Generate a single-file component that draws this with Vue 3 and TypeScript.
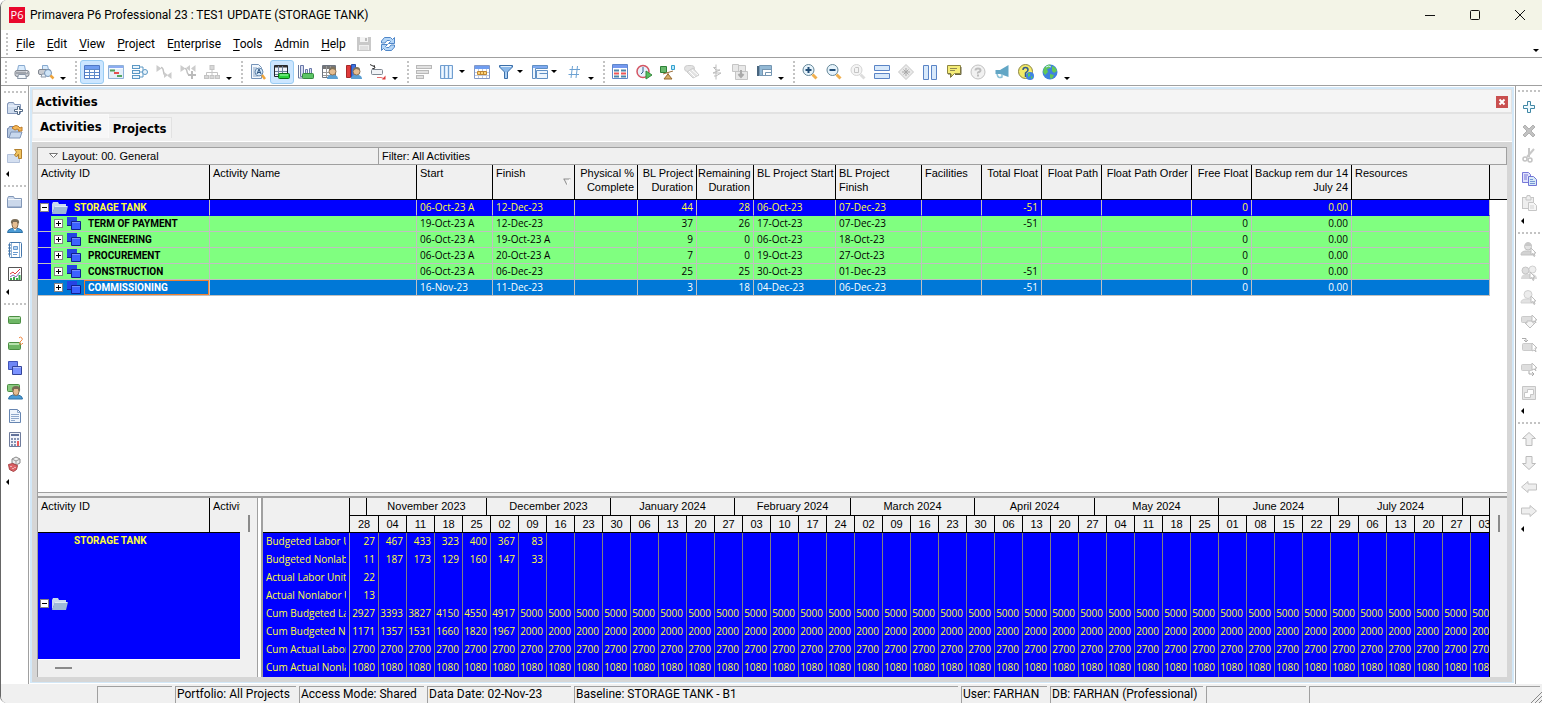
<script setup lang="ts">
interface Tool { id: string; label: string; active?: boolean; menu?: boolean }
interface Column { label: string; width?: number; right?: boolean; sorted?: boolean }
interface Row { name: string; level: number; selected?: boolean; cells: string[] }

const icons: Record<string, string> = {
  save: '<path d="M1 1h14v14H1z" fill="#c9c9c9"/><path d="M4 1h8v5H4z" fill="#f4f4f4"/><path d="M3 9h10v5H3z" fill="#efefef"/><path d="M9 2h2v3H9z" fill="#bbb"/><path d="M4 11h8M4 13h8" stroke="#d0d0d0"/>',
  refresh: '<path d="M1.500 7V5l3-3.500h6l2 2 2-2v6h-6l2-2-1-1H7L5 7z" fill="#b5d6f7" stroke="#4f86c8"/><path d="M14.500 9v2l-3 3.500h-6l-2-2-2 2v-6h6l-2 2 1 1H9L11 9z" fill="#b5d6f7" stroke="#4f86c8"/>',
  print: '<path d="M4.500 1.500h6l1 5h-8z" fill="#d9ebfc" stroke="#87a9cf"/><rect x="1" y="6.500" width="14" height="6" rx="2" fill="#c9ccd2" stroke="#80868f"/><path d="M2 9h12" stroke="#777d86"/><path d="M4.500 10.500h7l1 4h-9z" fill="#f4f8fc" stroke="#8c98a8"/><path d="M12 8h1" stroke="#fff"/>',
  preview: '<path d="M4.500 1.500h5l1 4h-6z" fill="#d9ebfc" stroke="#87a9cf"/><rect x=".5" y="5.500" width="12" height="5" rx="1.500" fill="#c9ccd2" stroke="#80868f"/><path d="M4 10h4v3H3z" fill="#edf3f9" stroke="#8c98a8"/><circle cx="10" cy="9" r="3.500" fill="#cfe5f8" stroke="#7593b5"/><path d="m12.500 11.500 3 3" stroke="#efa53c" stroke-width="2.500"/>',
  table: '<path d="M.5 1.500h15v13H.5z" fill="#fff" stroke="#4f78c4"/><path d="M1 2h14v3H1z" fill="#6f9df0"/><path d="M1 5.500h14M1 8.500h14M1 11.500h14M5.500 5v9M10.500 5v9" stroke="#5d89c9"/>',
  gantt: '<path d="M.5 1.500h15v13H.5z" fill="#f5fafe" stroke="#8fb2d8"/><path d="M1 2h14v2H1z" fill="#8cacf1"/><path d="M1 5h14v9H1z" fill="#e4eff9"/><path d="M2 6.500h5" stroke="#4f9d59" stroke-width="2"/><path d="M6 9h5" stroke="#e54f4f" stroke-width="2"/><path d="M9 12h5" stroke="#55a561" stroke-width="2"/>',
  network: '<g fill="#e9f4fc" stroke="#5c98c4"><rect x=".5" y="1.500" width="7" height="3"/><rect x=".5" y="6.500" width="7" height="3"/><rect x=".5" y="11.500" width="7" height="3"/><path d="M8 3h3v10H8M8 8h3" fill="none"/><circle cx="13" cy="8" r="2.500"/></g>',
  trace: '<path d="M.5 1v7l5-3.500z" fill="#ccc"/><path d="M5 3.500c4 0 1 8 5 8" fill="none" stroke="#c2c2c2" stroke-width="1.500"/><path d="M8 8v6l4-3zM15.500 8v7L11 11.500z" fill="#ccc"/>',
  traceplus: '<path d="M.5 1v7l5-3.500zM10 1v6L6 4zM15.500 1v7L11 4.500z" fill="#ccc"/><path d="M5 4.500c3 0 1 6 4 6" fill="none" stroke="#c2c2c2" stroke-width="1.500"/><path d="M12 7v8M8 11h8" stroke="#bbb" stroke-width="2"/>',
  wbs: '<g fill="#d8d8d8" stroke="#c4c4c4"><rect x="6" y="1.500" width="4" height="4"/><rect x=".5" y="11.500" width="4" height="3"/><rect x="6" y="11.500" width="4" height="3"/><rect x="11.500" y="11.500" width="4" height="3"/><path d="M8 6v5M2.500 11V8.500h11V11" fill="none"/></g>',
  find: '<path d="M1.500.5h7l3 3v11h-10z" fill="#f3f8fd" stroke="#7694b9"/><path d="M3 4h4M3 6h2M3 8h2M3 10h2M3 12h5" stroke="#88a3c5"/><circle cx="9" cy="8" r="4" fill="#d3e7f8" stroke="#6688ad"/><path d="m7 10 2-5 2 5M8 8.500h2" stroke="#2d5480" fill="none"/><path d="m12 11 3 4" stroke="#efa53c" stroke-width="2.500"/>',
  spread: '<path d="M.5 1.500h13v11H.5z" fill="#eef2f8" stroke="#22252b"/><path d="M1 2.500h12" stroke="#333" stroke-width="2"/><path d="M1 7.500h12M1 10.500h12M4.500 2v10M8.500 2v10" stroke="#6d7f9c"/><rect x="4.500" y="9.500" width="11" height="5" rx="1" fill="#28d23c" stroke="#0a6f16"/><path d="M6 11h8" stroke="#a5f7ad"/>',
  profile: '<path d="M.5 1v13h15" fill="none" stroke="#67779c"/><path d="M2.500 1.500h3v11h-3zM7.500 5.500h2v7h-2zM11.500 4.500h2v7h-2z" fill="#d9ddf2" stroke="#6878a8"/><rect x="4.500" y="9.500" width="11" height="5" rx="1" fill="#5bc465" stroke="#348a3d"/>',
  usage: '<path d="M.5 1.500h13v12H.5z" fill="#fff" stroke="#6e7580"/><path d="M1 2h12v3H1z" fill="#777"/><path d="M1 8.500h12M1 11.500h12M4.500 2v11M8.500 2v11" stroke="#999"/><path d="M5 15q0-3 3-4h5q3 1 3 4z" fill="#5b9fd2"/><circle cx="10.500" cy="7.500" r="3.500" fill="#e5bd91" stroke="#8a7252"/><path d="M7 7q0-4 4-4 3 0 3 3l-4-1z" fill="#80735b"/>',
  resprofile: '<path d="M.5 1.500h4v12h-4z" fill="#e03a3a" stroke="#a72828"/><path d="M5.500.5h4v13h-4z" fill="#3f71df" stroke="#2750a6"/><path d="M5 15q0-3 3-4h5q3 1 3 4z" fill="#5b9fd2"/><circle cx="10.500" cy="7.500" r="3.500" fill="#e5bd91" stroke="#8a7252"/><path d="M7 7q0-4 4-4 3 0 3 3l-4-1z" fill="#80735b"/>',
  trace2: '<path d="m0 .5 4 2M2 5l3-1-1-3" fill="none" stroke="#333"/><rect x="1.500" y="5.500" width="11" height="5" rx="1" fill="#f1f3f6" stroke="#7f8791"/><path d="M7 13.500h4l3 1" stroke="#e46a6a" fill="none"/><path d="m12 15.500 3.500-4v4z" fill="#dc3939"/>',
  bars: '<g fill="#e1e1e1" stroke="#b9b9b9"><rect x=".5" y="1.500" width="15" height="3"/><rect x=".5" y="6.500" width="12" height="3"/><rect x=".5" y="11.500" width="7" height="3"/></g>',
  columns: '<g fill="#d7e8fa" stroke="#709ed0"><path d="M.5 1.500h12v13H.5zM4.500 1.500v13M8.500 1.500v13"/></g><path d="M2.500 2v12M6.500 2v12M10.500 2v12" stroke="#f1f8ff"/>',
  tscale: '<path d="M.5 1.500h15v13H.5z" fill="#fff" stroke="#8399c6"/><path d="M1 2h14v3H1z" fill="#6f9df0"/><path d="M1 8.500h14M1 11.500h14M4.500 5v9M8.500 5v9M12.500 5v9" stroke="#c2cadd"/><path d="M3.500 7.500h9v3h-9zM6.500 7v3M9.500 7v3" fill="#ffd476" stroke="#bf8633"/>',
  filter: '<path d="M1.500 1.500h13v1.500L9.500 8v6.500h-3V8l-5-5z" fill="#8bb9ea" stroke="#3b6ea8"/><path d="M3 2.500h10" stroke="#e4f1ff"/><path d="M8 8v6" stroke="#c7e0f9"/>',
  group: '<g fill="#edf5fd" stroke="#5f8fc4"><path d="M.5 1.500h15v3h-12v10h-3zM4.500 6.500h11v8h-11zM7.500 9.500h8"/></g><path d="M1 3h14" stroke="#7faaf1" stroke-width="2"/>',
  hash: '<path d="M6.500 2 5 14M11.500 2 10 14M3.500 5.500H14M2.500 10.500H13" stroke="#6da2d3" fill="none"/>',
  detail: '<path d="M.5.5h15v14H.5z" fill="#fff" stroke="#5e87ca"/><path d="M1 1h14v3H1z" fill="#7599ef"/><path d="M2 6.500h5M9 6.500h5M2 12.500h5M9 12.500h5" stroke="#4e86a7" stroke-width="2"/><path d="M2 9.500h5M9 9.500h5" stroke="#ed5656" stroke-width="2"/>',
  clock: '<circle cx="7" cy="7.500" r="6" fill="#e7f3fc" stroke="#d45563" stroke-width="1.500"/><path d="M7 3v5l-2 2" stroke="#345f8e" fill="none"/><path d="m10 7 6 4-6 4z" fill="#55c05f" stroke="#39883f"/>',
  level: '<path d="M.5 2.500h6v6h-6z" fill="#69ba6e" stroke="#2e8138"/><path d="M11.500 1.500h3v4h-3z" fill="#b9e7fb" stroke="#34a1cd"/><path d="m3 10 10-3M8 8v4" stroke="#9c7140"/><path d="m8 10 4 5H4z" fill="#d8ae68" stroke="#95692c"/>',
  progress: '<g fill="#e3e3e3" stroke="#ccc"><rect x=".5" y="1.500" width="10" height="6" rx="3"/><path d="m3 8 6 6 6-3-6-7z"/></g><path d="m5 7 6 6m-3-7 6 5" stroke="#fff"/>',
  line: '<path d="M8 .5v15M8 3.500H5.500L8 6h4L5 9h8l-5 3H6" fill="none" stroke="#bdbdbd"/>',
  store: '<g fill="#e8e8e8" stroke="#c5c5c5"><path d="M.5.500h6v7h-6zM6.500 1.500h7v6h-7zM3.500 7.500h12v8h-12z"/></g><path d="M9 6v6M6.500 10 9 13l2.500-3" fill="none" stroke="#aaa" stroke-width="2"/>',
  barchart: '<path d="M1 2h2v10H1z" fill="#48657e"/><path d="M3 2h12v3H6v7H3z" fill="#92b8d4"/><path d="M3.500 1.500h12v10h-12zM6 5.500h9M6.500 5.500v6M9.500 11V8.500H15" fill="none" stroke="#7596b2"/>',
  zoomin: '<circle cx="6.500" cy="6" r="5.500" fill="#e6f3fb" stroke="#66889a"/><path d="M6.500 3v6M3.500 6h6" stroke="#234e77" stroke-width="2"/><path d="m10.500 10.500 4 4" stroke="#f0b050" stroke-width="3"/>',
  zoomout: '<circle cx="6.500" cy="6" r="5.500" fill="#e6f3fb" stroke="#66889a"/><path d="M3.500 6h6" stroke="#234e77" stroke-width="2"/><path d="m10.500 10.500 4 4" stroke="#f0b050" stroke-width="3"/>',
  zoomfit: '<circle cx="6.500" cy="6" r="5.500" fill="#f4f4f4" stroke="#d5d5d5"/><path d="M4.500 8.500v-4l1-1h3v5z" fill="none" stroke="#c5c5c5"/><path d="m10.500 10.500 4 4" stroke="#ddd" stroke-width="3"/>',
  splith: '<g fill="#d8e9fb" stroke="#5a84c6"><path d="M.5 1.500h15v5H.5zM.5 9.500h15v5H.5z"/></g>',
  diamond: '<path d="M8 .5 15.500 8 8 15.500.5 8z" fill="#e8e8e8" stroke="#c8c8c8"/><path d="M8 4v8M4 8h8M5.500 5.500l5 5M10.500 5.500l-5 5" stroke="#a9a9a9"/>',
  splitv: '<g fill="#d8e9fb" stroke="#5a84c6"><path d="M1.500 1.500h5v14h-5zM9.500 1.500h5v14h-5z"/></g>',
  note: '<path d="M1.500 1.500h13v8h-6l-4 4v-4h-3z" fill="#f5ed78" stroke="#8f8640"/><path d="M4 4.500h7M4 6.500h5" stroke="#918a51"/><path d="M2 10h3v3M9 10.500h6V3" stroke="#696440" fill="none"/>',
  help: '<circle cx="8" cy="8" r="7" fill="#f1f1f1" stroke="#c2c2c2"/><path d="M5.500 6.500q0-2 2.500-2t2.500 2q0 1-1.500 1.500T8 9.500M8 10.500v2" fill="none" stroke="#bdbdbd" stroke-width="2"/>',
  horn: '<path d="M14.500 1v12L6 10H1.500V6H6z" fill="#62a6c5"/><path d="M3 10q1 5 5 3V10" fill="none" stroke="#8cc1d6" stroke-width="1.500"/>',
  helpweb: '<circle cx="7.500" cy="7.500" r="7" fill="#f3ea68" stroke="#8b8544"/><path d="M5 6q0-2.500 2.500-2.500T10 6q0 1-1.500 2l-1 1v2M7.500 11v2" fill="none" stroke="#31598e" stroke-width="1.500"/><circle cx="12" cy="12" r="4" fill="#3f83e6"/><path d="M10 9q3 0 2 3l-2 1zM13 12l2 1-2 2z" fill="#58ca5c"/>',
  globe: '<circle cx="8" cy="8" r="7.500" fill="#3f80df"/><path d="M2 4q4-5 7-3L8 4 5 5l1 3-3 3-2-3zM10 2q4 1 5 5l-3 2-2-2zM8 10l4 1-2 4-2-1z" fill="#63c857"/><path d="M4 3q3-2 5 0" stroke="#cfefff" fill="none"/>',
  foldernew: '<path d="M.5 13.500v-10h1v-1h5l1 2h6v9z" fill="#cfdcee" stroke="#8497b8"/><path d="M1 6h12" stroke="#f2f7ff"/><path d="M10.500 6.500h2v3h3v2h-3v3h-2v-3h-3v-2h3z" fill="#fff" stroke="#536984"/>',
  folderopen: '<path d="M.5 13.500v-9h1l1-2h5l1 2h4v9z" fill="#b5c7e0" stroke="#7489ae"/><path d="m2 14 2-6h11l-2 6z" fill="#c7d7ec" stroke="#7e94b7"/><path d="M5 4q4-5 8 0l2-1v4h-4l1-1q-2-2-4 0z" fill="#f7b958" stroke="#bc7a26"/>',
  folderclose: '<path d="M.5 14.500v-8h12v8z" fill="#d4dff0" stroke="#b2c1da"/><path d="M7.500 1.500h7v9h-3V6l-2 3-2-2 2-3z" fill="#efc25f" stroke="#b2812f"/>',
  folder: '<path d="M.5 13.500v-9l1-2h5l1 2h7v9z" fill="#cbd8eb" stroke="#8398b8"/><path d="M1 5.500h13" stroke="#f3f7fc"/><path d="M1 12.500h13" stroke="#a5b6d2"/>',
  person: '<path d="M.5 14.500q0-3 4-4h7q4 1 4 4z" fill="#4b9bd5" stroke="#2e71a5"/><path d="m6 10 2 3 2-3z" fill="#fff"/><ellipse cx="8" cy="6.500" rx="3" ry="4" fill="#e6bd91" stroke="#876c4f"/><path d="M4 6Q3 1 8 1t4 5l-2-2H6z" fill="#796b55"/>',
  book: '<rect x="2.500" y=".5" width="12" height="15" rx="1" fill="#fff" stroke="#4577ac"/><path d="M1 3h3M1 6h3M1 9h3M1 12h3" stroke="#4577ac"/><path d="M4.500 1v14M12.500 1v14" stroke="#8fb3d8"/><path d="M6.500 4.500h4v3h-4zM6 10.500h5M6 12.500h4" fill="#b7d4f2" stroke="#6a9bd0"/>',
  chart: '<path d="M1.500 1.500h13v13h-13z" fill="#fff" stroke="#555"/><path d="m3 8 3-2 2 2 5-5" fill="none" stroke="#e23c3c"/><path d="m3 11 3-2 3 2 4-5" fill="none" stroke="#8a68b5"/><path d="M4 12v2M7 11v3M10 12v2M12.500 9v5" stroke="#3baa4c" stroke-width="2"/>',
  activity: '<rect x="1.500" y="4.500" width="12" height="7" rx="1" fill="#6eb665" stroke="#4b8e43"/><path d="M2 6h11" stroke="#b7e2ae" stroke-width="2"/>',
  activitysteps: '<rect x="1.500" y="6.500" width="12" height="7" rx="1" fill="#6eb665" stroke="#4b8e43"/><path d="M2 8h10" stroke="#b7e2ae" stroke-width="2"/><path d="M12 2q1-2 3 0 1 2-1 3t-1 3q2 1 3-1" fill="none" stroke="#f18a46"/>',
  wbsblue: '<path d="M1.500 1.500h9v8h-9z" fill="#6f87f5" stroke="#4154b9"/><path d="M5.500 6.500h9v8h-9z" fill="#7b93ff" stroke="#34459a"/><path d="M6 7.500h8" stroke="#a9b9ff"/>',
  assign: '<rect x=".5" y=".5" width="12" height="7" rx="1" fill="#8acb80" stroke="#4b8e43"/><path d="M1.500 15q0-3 4-4h6q4 1 4 4z" fill="#4b9bd5" stroke="#2e71a5"/><ellipse cx="9" cy="7.500" rx="3" ry="4" fill="#e6bd91" stroke="#876c4f"/><path d="M5 7Q4 2 9 2t4 5l-2-2H7z" fill="#796b55"/>',
  doc: '<path d="M2.500 1.500h8l3 3v10h-11z" fill="#f0f6fd" stroke="#6685b1"/><path d="M10.500 1.500v3h3M4 6.500h8M4 8.500h8M4 10.500h8M4 12.500h4" fill="none" stroke="#8fa8cb"/>',
  calc: '<path d="M2.500.5h11v14h-11z" fill="#f2f4fa" stroke="#6f7c9c"/><path d="M4 3h8" stroke="#62729b" stroke-width="2"/><path d="M4 7h2M7 7h2M4 10h2M7 10h2M4 13h2M7 13h2M10 7h2" stroke="#8391b1" stroke-width="2"/><path d="M11 9v5" stroke="#ee5a5a" stroke-width="2"/>',
  dice: '<path d="m5 3 4-2 4 2v4L9 9 5 7z" fill="#eee" stroke="#888"/><path d="m5 3 4 2 4-2M9 5v3" fill="none" stroke="#999"/><path d="m1.500 8.500 4-1 5 2-1 4-3 2-4-2z" fill="#dc6266" stroke="#a84143"/><path d="M4 10v1M6 12v1M8 11v1" stroke="#fff"/>',
  add: '<path d="M6.500 2.500h3v4h4v3h-4v4h-3v-4h-4v-3h4z" fill="#eefaff" stroke="#4087a5"/>',
  remove: '<path d="m4 2 4 4 4-4 2 2-4 4 4 4-2 2-4-4-4 4-2-2 4-4-4-4z" fill="#c2c2c2" stroke="#b1b1b1"/>',
  cut: '<path d="M8 1v9M13 2 6 10" stroke="#c8c8c8" stroke-width="2" fill="none"/><circle cx="4" cy="12" r="2" fill="none" stroke="#c3c3c3" stroke-width="1.500"/><circle cx="9" cy="13" r="2" fill="none" stroke="#c3c3c3" stroke-width="1.500"/>',
  copy: '<path d="M1.500 1.500h6l2 2v8h-8z" fill="#e0e2fb" stroke="#7879d8"/><path d="M3 4h4M3 6h3M3 8h3" stroke="#7677d7"/><path d="M7.500 5.500h5l3 3v6h-8z" fill="#d7e9f7" stroke="#7074d5"/><path d="M9 8.500h3M9 10.500h5M9 12.500h5" stroke="#7898d5"/>',
  paste: '<rect x="1.500" y="2.500" width="11" height="11" fill="#eee" stroke="#c6c6c6"/><path d="M5 2h1V.500h3V2h1v3H5z" fill="#eee" stroke="#c6c6c6"/><path d="M7.500 7.500h5l3 3v5h-8z" fill="#f6f6f6" stroke="#c6c6c6"/><path d="M9 11h4M9 13h4" stroke="#d3d3d3"/>',
  gperson: '<path d="M0 14q0-4 5-4h4q4 0 4 4z" fill="#d2d2d2" stroke="#c3c3c3"/><circle cx="7" cy="5.500" r="3.500" fill="#e2e2e2" stroke="#c0c0c0"/><path d="M4 5q0-4 3-4t4 4z" fill="#c8c8c8"/><path d="m10 7 5 5h-2l1 3-1 .5-1-3-2 1z" fill="#fff" stroke="#bdbdbd"/>',
  gpeople: '<path d="M0 14q0-4 4-5h8q4 1 4 5z" fill="#d9d9d9"/><circle cx="4.500" cy="5.500" r="3.500" fill="#dedede" stroke="#c5c5c5"/><circle cx="11.500" cy="4.500" r="3.500" fill="#eee" stroke="#d0d0d0"/><path d="m9 7 5 5h-2l1 3-1 .5-1-3-2 1z" fill="#fff" stroke="#bdbdbd"/>',
  grole: '<path d="M0 14q0-4 5-4h4q4 0 4 4z" fill="#e2e2e2" stroke="#d3d3d3"/><circle cx="7" cy="5.500" r="4" fill="#ececec" stroke="#d0d0d0"/><path d="m10 7 5 5h-2l1 3-1 .5-1-3-2 1z" fill="#fff" stroke="#bdbdbd"/>',
  gact: '<rect x=".5" y="3.500" width="11" height="6" rx="1" fill="#dedede" stroke="#cbcbcb"/><path d="m9 15-5-5h2V8h6v2h2z" fill="#f5f5f5" stroke="#bfbfbf"/><path d="m11 2 5 5h-2l1 3-2-2-2 1z" fill="#fff" stroke="#bdbdbd"/>',
  gpred: '<path d="M1 1.500h4V5M3 3l2 2 2-2" fill="none" stroke="#aaa"/><rect x="1.500" y="6.500" width="10" height="7" rx="1" fill="#dedede" stroke="#cbcbcb"/><path d="m11 6 5 5h-2l1 4-2-2-2 1z" fill="#fff" stroke="#bdbdbd"/>',
  gsucc: '<rect x=".5" y="3.500" width="11" height="6" rx="1" fill="#dedede" stroke="#cbcbcb"/><path d="M8 10v3h5m-2-2 2 2-2 2" fill="none" stroke="#aaa"/><path d="m11 2 5 5h-2l1 3-2-2-2 1z" fill="#fff" stroke="#bdbdbd"/>',
  gcode: '<path d="M1.500 1.500h13v13h-13z" fill="#e6e6e6" stroke="#c6c6c6"/><path d="M6.500 4.500h6v5h-3v3h-6v-5h3z" fill="#fff" stroke="#c6c6c6"/>',
  up: '<path d="m8 1.500 6.500 6h-3.500v7H5v-7H1.500z" fill="#eee" stroke="#bcbcbc"/>',
  down: '<path d="M8 14.500 1.500 8.500H5v-7h6v7h3.500z" fill="#eee" stroke="#bcbcbc"/>',
  left: '<path d="M.5 8 7 2.500V5h8.500v6H7v2.500z" fill="#eee" stroke="#c2c2c2"/>',
  right: '<path d="M15.500 8 9 2.500V5H.5v6H9v2.500z" fill="#eee" stroke="#c2c2c2"/>',
  tankfolder: '<path d="M0 14V4l1-2h5l1 2h7v3H3z" fill="#c9dbee"/><path d="m0 14 3-8h13l-2 8z" fill="#9db9d8"/><path d="M3 6.500h12" stroke="#dfeaf6"/>',
  node: '<path d="M0 1h10v8H0z" fill="#2543e4"/><path d="M4.500 5.500h9v8h-9z" fill="#3d62ff" stroke="#10208e"/><path d="M0 9.500h4" stroke="#10208e"/><path d="M5 6.500h8" stroke="#6f8cff"/>',
}

const t = (id: string, label: string, extra: Partial<Tool> = {}): Tool => ({ id, label, ...extra })

const toolbar: Tool[][] = [
  [t('print', 'Print'), t('preview', 'Print Preview')],
  [t('table', 'Activity Table', { active: true }), t('gantt', 'Gantt Chart'), t('network', 'Activity Network'), t('trace', 'Trace Logic'), t('traceplus', 'Trace Options'), t('wbs', 'WBS Chart')],
  [t('find', 'Details'), t('spread', 'Activity Usage Spreadsheet', { active: true }), t('profile', 'Activity Usage Profile'), t('usage', 'Resource Usage Spreadsheet'), t('resprofile', 'Resource Usage Profile'), t('trace2', 'Relationships')],
  [t('bars', 'Bars'), t('columns', 'Columns', { menu: true }), t('tscale', 'Timescale'), t('filter', 'Filters', { menu: true }), t('group', 'Group and Sort', { menu: true }), t('hash', 'Renumber')],
  [t('detail', 'Activity Details'), t('clock', 'Schedule'), t('level', 'Level Resources'), t('progress', 'Apply Actuals'), t('line', 'Progress Line'), t('store', 'Store Period'), t('barchart', 'Progress Spotlight')],
  [t('zoomin', 'Zoom In'), t('zoomout', 'Zoom Out'), t('zoomfit', 'Zoom Fit'), t('splith', 'Split Horizontally'), t('diamond', 'Center'), t('splitv', 'Split Vertically'), t('note', 'Hint Help'), t('help', 'Help'), t('horn', 'News'), t('helpweb', 'Online Help'), t('globe', 'Web')],
]
const leftTools: Tool[][] = [
  [t('foldernew', 'New Project'), t('folderopen', 'Open Project'), t('folderclose', 'Close Project')],
  [t('folder', 'Projects'), t('person', 'Resources'), t('book', 'Reports'), t('chart', 'Tracking')],
  [t('activity', 'Activities'), t('activitysteps', 'Activity Steps'), t('wbsblue', 'WBS'), t('assign', 'Assignments'), t('doc', 'Documents'), t('calc', 'Expenses'), t('dice', 'Risks')],
]
const rightTools: Tool[][] = [
  [t('add', 'Add'), t('remove', 'Delete'), t('cut', 'Cut'), t('copy', 'Copy'), t('paste', 'Paste')],
  [t('gperson', 'Assign Resource'), t('gpeople', 'Assign by Role'), t('grole', 'Assign Role'), t('gact', 'Assign Activity'), t('gpred', 'Assign Predecessor'), t('gsucc', 'Assign Successor'), t('gcode', 'Assign Code')],
  [t('up', 'Move Up'), t('down', 'Move Down'), t('left', 'Move Left'), t('right', 'Move Right')],
]

const menus: [string, string, string][] = [
  ['', 'F', 'ile'], ['', 'E', 'dit'], ['', 'V', 'iew'], ['', 'P', 'roject'],
  ['E', 'n', 'terprise'], ['', 'T', 'ools'], ['', 'A', 'dmin'], ['', 'H', 'elp'],
]

const columns: Column[] = [
  { label: 'Activity ID', width: 172 }, { label: 'Activity Name', width: 207 },
  { label: 'Start', width: 76 }, { label: 'Finish', width: 82, sorted: true },
  { label: 'Physical % Complete', width: 63, right: true }, { label: 'BL Project Duration', width: 59, right: true },
  { label: 'Remaining Duration', width: 57, right: true }, { label: 'BL Project Start', width: 82 },
  { label: 'BL Project Finish', width: 86 }, { label: 'Facilities', width: 60 },
  { label: 'Total Float', width: 60, right: true }, { label: 'Float Path', width: 60, right: true },
  { label: 'Float Path Order', width: 90, right: true }, { label: 'Free Float', width: 60, right: true },
  { label: 'Backup rem dur 14 July 24', width: 100, right: true }, { label: 'Resources', width: 138 },
]
const rows: Row[] = [
  { name: 'STORAGE TANK', level: 0, cells: ['', '06-Oct-23 A', '12-Dec-23', '', '44', '28', '06-Oct-23', '07-Dec-23', '', '-51', '', '', '0', '0.00', ''] },
  { name: 'TERM OF PAYMENT', level: 1, cells: ['', '19-Oct-23 A', '12-Dec-23', '', '37', '26', '17-Oct-23', '07-Dec-23', '', '-51', '', '', '0', '0.00', ''] },
  { name: 'ENGINEERING', level: 1, cells: ['', '06-Oct-23 A', '19-Oct-23 A', '', '9', '0', '06-Oct-23', '18-Oct-23', '', '', '', '', '0', '0.00', ''] },
  { name: 'PROCUREMENT', level: 1, cells: ['', '06-Oct-23 A', '20-Oct-23 A', '', '7', '0', '19-Oct-23', '27-Oct-23', '', '', '', '', '0', '0.00', ''] },
  { name: 'CONSTRUCTION', level: 1, cells: ['', '06-Oct-23 A', '06-Dec-23', '', '25', '25', '30-Oct-23', '01-Dec-23', '', '-51', '', '', '0', '0.00', ''] },
  { name: 'COMMISSIONING', level: 1, selected: true, cells: ['', '16-Nov-23', '11-Dec-23', '', '3', '18', '04-Dec-23', '06-Dec-23', '', '-51', '', '', '0', '0.00', ''] },
]

const months: { label: string; width: number }[] = [
  { label: '', width: 17 }, { label: 'November 2023', width: 120 }, { label: 'December 2023', width: 124 },
  { label: 'January 2024', width: 124 }, { label: 'February 2024', width: 116 }, { label: 'March 2024', width: 124 },
  { label: 'April 2024', width: 120 }, { label: 'May 2024', width: 124 }, { label: 'June 2024', width: 120 },
  { label: 'July 2024', width: 124 }, { label: '', width: 60 },
]
const weeks = '28 04 11 18 25 02 09 16 23 30 06 13 20 27 03 10 17 24 02 09 16 23 30 06 13 20 27 04 11 18 25 01 08 15 22 29 06 13 20 27 03'.split(' ')
const series = (head: string, rest = ''): string[] => {
  const values = head ? head.split(' ') : []
  return weeks.map((_, i) => values[i] ?? rest)
}
const spread: { label: string; values: string[] }[] = [
  { label: 'Budgeted Labor Units', values: series('27 467 433 323 400 367 83') },
  { label: 'Budgeted Nonlabor Units', values: series('11 187 173 129 160 147 33') },
  { label: 'Actual Labor Units', values: series('22') },
  { label: 'Actual Nonlabor Units', values: series('13') },
  { label: 'Cum Budgeted Labor Units', values: series('2927 3393 3827 4150 4550 4917', '5000') },
  { label: 'Cum Budgeted Nonlabor Units', values: series('1171 1357 1531 1660 1820 1967', '2000') },
  { label: 'Cum Actual Labor Units', values: series('', '2700') },
  { label: 'Cum Actual Nonlabor Units', values: series('', '1080') },
]

const statuses: { text: string; cls: string }[] = [
  { text: '', cls: 's75' }, { text: 'Portfolio: All Projects', cls: 's121' }, { text: 'Access Mode: Shared', cls: 's125' },
  { text: 'Data Date: 02-Nov-23', cls: 's144' }, { text: 'Baseline: STORAGE TANK - B1', cls: 'grow' },
  { text: 'User: FARHAN', cls: 's86' }, { text: 'DB: FARHAN (Professional)', cls: 's153' }, { text: '', cls: 's100' }, { text: '', cls: 's231' },
]
</script>

<template>
  <div class="window">
    <header class="titlebar">
      <span class="logo">P6</span>
      <h1>Primavera P6 Professional 23 : TES1 UPDATE (STORAGE TANK)</h1>
      <div class="winbuttons">
        <button aria-label="Minimize"><svg viewBox="0 0 12 12"><path d="M1 6.500h10" /></svg></button>
        <button aria-label="Maximize"><svg viewBox="0 0 12 12"><rect x="1.500" y="1.500" width="9" height="9" rx="1" /></svg></button>
        <button aria-label="Close window"><svg viewBox="0 0 12 12"><path d="m1 1 10 10M11 1 1 11" /></svg></button>
      </div>
    </header>

    <nav class="menubar">
      <i class="grip"></i>
      <button v-for="m in menus" :key="m.join('')" class="menu">{{ m[0] }}<u>{{ m[1] }}</u>{{ m[2] }}</button>
      <button class="tool" aria-label="Save"><svg class="ico" viewBox="0 0 16 16" v-html="icons.save"></svg></button>
      <button class="tool" aria-label="Refresh"><svg class="ico" viewBox="0 0 16 16" v-html="icons.refresh"></svg></button>
      <button class="more end" aria-label="Menu options"><i class="caret"></i></button>
    </nav>

    <div class="toolbar">
      <div v-for="(group, g) in toolbar" :key="g" class="tgroup">
        <i class="grip"></i>
        <button v-for="b in group" :key="b.id" class="tool" :class="{ active: b.active, split: b.menu }" :aria-label="b.label">
          <svg class="ico" viewBox="0 0 16 16" v-html="icons[b.id]"></svg><i v-if="b.menu" class="caret"></i>
        </button>
        <button class="more" aria-label="Toolbar options"><i class="caret"></i></button>
      </div>
    </div>

    <div class="body">
      <aside class="side">
        <div v-for="(group, g) in leftTools" :key="g" class="vgroup">
          <i class="grip"></i>
          <button v-for="b in group" :key="b.label" class="tool" :aria-label="b.label"><svg class="ico" viewBox="0 0 16 16" v-html="icons[b.id]"></svg></button>
          <button class="more" aria-label="Bar options"><i class="caret side-caret"></i></button>
        </div>
      </aside>

      <main class="frame">
        <div class="viewtitle">
          <h2>Activities</h2>
          <button class="closeview" aria-label="Close view"><svg viewBox="0 0 8 8"><path d="m1.500 1.500 5 5M6.500 1.500l-5 5" /></svg></button>
        </div>
        <div class="tabs" role="tablist">
          <button class="tab current" role="tab" aria-selected="true">Activities</button>
          <button class="tab" role="tab" aria-selected="false">Projects</button>
        </div>
        <div class="workspace">
          <div class="panel">
            <div class="layoutbar">
              <button class="layout"><svg viewBox="0 0 9 6"><path d="M.5.5h8l-4 4z" /></svg>Layout: 00. General</button>
              <span class="filter">Filter: All Activities</span>
            </div>

            <div class="gridarea">
              <table class="grid">
                <colgroup>
                  <col v-for="c in columns" :key="c.label" :style="{ width: c.width + 'px' }" />
                  <col />
                </colgroup>
                <thead>
                  <tr>
                    <th v-for="c in columns" :key="c.label" :class="{ right: c.right }">
                      <div class="headcell">{{ c.label }}<svg v-if="c.sorted" viewBox="0 0 8 8"><path d="M.5 1h7M1 1l3 6" /><path class="lite" d="m4 7 3-6" /></svg></div>
                    </th>
                    <th class="filler"></th>
                  </tr>
                </thead>
                <tbody>
                  <tr v-for="r in rows" :key="r.name" :class="r.selected ? 'selected' : 'level' + r.level">
                    <td class="idcell">
                      <div class="id">
                        <i v-if="r.level" class="strip"></i>
                        <button class="expander" :aria-label="(r.level ? 'Expand ' : 'Collapse ') + r.name"><i v-if="r.level" class="plus"></i></button>
                        <svg class="ico" viewBox="0 0 16 16" v-html="r.level ? icons.node : icons.tankfolder"></svg>
                        <b>{{ r.name }}</b>
                      </div>
                    </td>
                    <td v-for="(v, i) in r.cells" :key="i" :class="{ right: columns[i + 1].right }">{{ v }}</td>
                    <td class="filler"></td>
                  </tr>
                </tbody>
              </table>
            </div>

            <div class="hsplit"></div>

            <div class="lower">
              <section class="lowleft">
                <div class="lowtable">
                  <div class="lowhead"><span class="h-id">Activity ID</span><span class="h-name">Activity Name</span></div>
                  <div class="lowbody">
                    <b>STORAGE TANK</b>
                    <div class="lowicons">
                      <button class="expander" aria-label="Collapse project"></button>
                      <svg class="ico" viewBox="0 0 16 16" v-html="icons.tankfolder"></svg>
                    </div>
                  </div>
                  <div class="hscroll"><i></i></div>
                </div>
                <div class="vscroll"><i></i></div>
              </section>
              <div class="vsplit"></div>
              <section class="spread">
                <div class="scale">
                  <div class="corner"></div>
                  <div class="scalerows">
                    <div class="months"><span v-for="(m, i) in months" :key="i" :style="{ width: m.width + 'px' }">{{ m.label }}</span></div>
                    <div class="weeks"><span v-for="(w, i) in weeks" :key="i">{{ w }}</span></div>
                  </div>
                </div>
                <table class="values">
                  <colgroup><col class="c-label" /><col class="c-first" /><col v-for="n in weeks.length - 1" :key="n" class="c-week" /></colgroup>
                  <tbody>
                    <tr v-for="s in spread" :key="s.label">
                      <th scope="row"><div>{{ s.label }}</div></th>
                      <td v-for="(v, i) in s.values" :key="i">{{ v }}</td>
                    </tr>
                  </tbody>
                </table>
              </section>
              <div class="vscroll"><i></i></div>
            </div>
          </div>
        </div>
      </main>

      <aside class="side rightside">
        <div v-for="(group, g) in rightTools" :key="g" class="vgroup">
          <i class="grip"></i>
          <button v-for="b in group" :key="b.label" class="tool" :aria-label="b.label"><svg class="ico" viewBox="0 0 16 16" v-html="icons[b.id]"></svg></button>
          <button class="more" aria-label="Bar options"><i class="caret side-caret"></i></button>
        </div>
      </aside>
    </div>

    <footer class="status">
      <span v-for="(s, i) in statuses" :key="i" :class="s.cls">{{ s.text }}</span>
      <svg class="sizer" viewBox="0 0 12 12"><path d="M1 12 12 1M5 12l7-7M9 12l3-3" /></svg>
    </footer>
  </div>
</template>

<style>
body { margin: 0; background: #fff; }
</style>

<style scoped>
.window { box-sizing: border-box; height: 100vh; min-height: 600px; display: flex; flex-direction: column; border-left: 1px solid #666; border-radius: 7px 0 0 7px; overflow: hidden; background: #fff; color: #000; font: 12px/16px Roboto, "Open Sans", sans-serif; }
.window *, .window *::before { box-sizing: border-box; }
button { appearance: none; border: 0; margin: 0; padding: 0; background: none; font: inherit; color: inherit; }
h1, h2 { margin: 0; font: inherit; white-space: nowrap; }
i { display: block; flex: none; }

.titlebar { height: 30px; flex: none; display: flex; align-items: center; gap: 5px; padding-left: 8px; background: #f3f4e7; }
.logo { width: 16px; height: 16px; background: #e9072c; color: #fff; font: 11px/16px "Open Sans", sans-serif; text-align: center; }
.winbuttons { margin-left: auto; display: flex; }
.winbuttons button { width: 45px; height: 30px; display: flex; align-items: center; justify-content: center; }
.winbuttons svg { width: 12px; height: 12px; fill: none; stroke: #111; }

.menubar { height: 28px; flex: none; display: flex; align-items: center; padding-left: 4px; border-bottom: 1px solid #a0a0a0; }
.menubar .grip { margin-right: 2px; height: 22px; }
.menu { padding: 0 6px; white-space: nowrap; }
.menu u { text-underline-offset: 2px; }
.end { margin-left: auto; height: 28px; }
.toolbar { height: 28px; flex: none; display: flex; border-bottom: 1px solid #a0a0a0; padding-left: 3px; }
.tgroup { display: flex; align-items: center; }
.grip { width: 2px; height: 22px; margin: 0 3px 0 1px; background: repeating-linear-gradient(#c3c3c3 0 2px, transparent 2px 4px); }
.tool { width: 24px; height: 24px; flex: none; display: flex; align-items: center; justify-content: center; border: 1px solid transparent; border-radius: 3px; }
.tool.active { background: #cce6ff; border-color: #99ccf3; }
.tool.split { width: 34px; justify-content: flex-start; gap: 3px; padding-left: 3px; }
.ico { width: 16px; height: 16px; flex: none; display: block; overflow: visible; }
.caret { width: 0; height: 0; border: 3px solid transparent; border-top-color: #000; border-bottom: 0; }
.side-caret { border: 3px solid transparent; border-right-color: #000; border-left: 0; }
.more { width: 16px; height: 24px; flex: none; display: flex; align-items: flex-end; padding: 0 0 4px 2px; }
.menubar .more { width: 11px; }

.body { flex: 1; min-height: 0; display: flex; }
.side { width: 28px; flex: none; padding-top: 4px; border-right: 1px solid #a0a0a0; overflow: hidden; }
.rightside { width: 27px; padding-top: 3px; border-right: 0; border-left: 1px solid #a0a0a0; }
.vgroup { display: flex; flex-direction: column; align-items: center; }
.vgroup .grip { width: 22px; height: 2px; margin: 1px 0 3px; background: repeating-linear-gradient(90deg, #c3c3c3 0 2px, transparent 2px 4px); }
.vgroup .more { width: 100%; height: 16px; align-items: center; padding: 0 0 4px 5px; }

.frame { flex: 1; min-width: 0; display: flex; flex-direction: column; margin: 1px; border: 2px solid #d3e8f8; border-bottom-width: 1px; background: #f0f0f0; }
.viewtitle { height: 25px; flex: none; display: flex; align-items: center; justify-content: space-between; padding: 1px 3px 0; border: 1px solid #e2e2e2; border-bottom-width: 2px; background: #f5f5f5; }
h2, .tab { font: bold 13px/16px "DejaVu Sans Condensed", "DejaVu Sans", sans-serif; font-stretch: condensed; }
.closeview { width: 12px; height: 12px; display: flex; align-items: center; justify-content: center; background: #c94f4f; }
.closeview svg { width: 8px; height: 8px; stroke: #fff; stroke-width: 2px; }
.tabs { height: 28px; flex: none; display: flex; align-items: flex-end; padding: 1px 0 3px 1px; border-bottom: 1px solid #fff; }
.tab { height: 21px; padding: 2px 4px 0; background: #f2f2f2; border: 1px solid #e2e2e2; border-width: 1px 1px 0 0; }
.tab.current { height: 24px; padding: 0 6px 0 7px; background: #f7f7f7; border-color: #fafafa; }

.workspace { flex: 1; min-height: 0; display: flex; padding: 5px; background: #d6d6d6; }
.panel { flex: 1; min-width: 0; display: flex; flex-direction: column; border: solid #a0a0a0; border-width: 1px 0 0 1px; background: #f0f0f0; font: 11px/14px "Liberation Sans", Arial, sans-serif; }
.layoutbar { height: 17px; flex: none; display: flex; align-items: center; border: solid #a0a0a0; border-width: 0 1px 1px 0; }
.layout { width: 341px; height: 16px; display: flex; align-items: center; gap: 4px; padding-left: 11px; border-right: 1px solid #a0a0a0; }
.layout svg { width: 9px; height: 6px; fill: #fff; stroke: #777; }
.filter { padding-left: 3px; }
.gridarea { flex: 1; min-height: 0; overflow: hidden; background: #fff; }
.grid { width: 100%; table-layout: fixed; border-collapse: separate; border-spacing: 0; }
.grid th { height: 35px; padding: 1px 0 0 3px; text-align: left; vertical-align: top; font-weight: 400; background: #f0f0f0; border: solid #000; border-width: 0 1px 1px 0; overflow: hidden; }
.grid th.filler { border-right: 0; }
.grid .right { text-align: right; }
.grid th.right { padding: 1px 3px 0 1px; }
.headcell { display: flex; justify-content: space-between; white-space: normal; }
.headcell svg { width: 8px; height: 8px; flex: none; margin: 12px 3px 0 0; fill: none; stroke: #8a8a8a; }
.headcell svg .lite { stroke: #fff; }
.grid th.right .headcell { display: block; }
.grid td { height: 16px; padding: 0 3px; border: solid #c0c0c0; border-width: 0 1px 1px 0; font: 10px/15px "Open Sans", "Noto Sans", sans-serif; white-space: nowrap; overflow: hidden; }
.grid td.filler { background: #fff; border: 0; }
.grid td.idcell { padding: 0; }
.level0 td { background: #00f; color: #ffff3c; border-bottom-color: #00f; }
.level1 td { background: #80ff80; }
.selected td { background: #0078d7; color: #fff; }
.id { height: 15px; display: flex; align-items: center; }
.id b, .lowbody b { font-family: Roboto, "Open Sans", sans-serif; font-weight: 700; }
.strip { width: 13px; height: 16px; background: #00f; }
.selected .strip { background: #0078d7; }
.expander { position: relative; width: 9px; height: 9px; flex: none; margin: 0 3px 0 2px; background: #fff; border: 1px solid #848284; }
.expander::before { content: ""; position: absolute; left: 1px; top: 3px; width: 5px; height: 1px; background: #000; }
.plus { position: absolute; left: 3px; top: 1px; width: 1px; height: 5px; background: #000; }
.id b { flex: 1; align-self: stretch; padding-left: 6px; }
.strip ~ .expander { margin: 0 4px 0 3px; }
.strip ~ b { padding-left: 3px; margin-left: 1px; border: 1px solid transparent; line-height: 14px; }
.selected .id b { border-color: #f08030; }

.hsplit { height: 6px; flex: none; border-top: 1px solid #a0a0a0; border-bottom: 2px solid #a0a0a0; background: #f0f0f0; }
.lower { height: 179px; flex: none; display: flex; }
.lowleft { width: 219px; flex: none; display: flex; }
.lowtable { width: 202px; flex: none; display: flex; flex-direction: column; }
.lowhead { height: 35px; flex: none; display: flex; border-bottom: 1px solid #000; }
.lowhead span { padding: 1px 3px 0; white-space: nowrap; overflow: hidden; }
.h-id { width: 172px; flex: none; border-right: 1px solid #000; }
.lowhead .h-name { flex: 1; min-width: 0; padding-right: 0; }
.lowbody { height: 126px; display: flex; flex-direction: column; background: #00f; color: #ffff3c; font: 10px/15px "Open Sans", "Noto Sans", sans-serif; }
.lowbody b { padding-left: 36px; }
.lowicons { flex: 1; display: flex; align-items: center; }
.hscroll { height: 18px; border-top: 1px solid #fff; padding: 7px 0 0 17px; }
.hscroll i { width: 17px; height: 2px; background: #8a8a8a; }
.vscroll { width: 17px; flex: none; padding: 17px 0 0 8px; }
.vscroll i { width: 2px; height: 17px; background: #8a8a8a; }
.vsplit { width: 6px; flex: none; background: #fff; border: solid #a0a0a0; border-width: 0 2px 0 1px; }
.spread { flex: 1; min-width: 0; overflow: hidden; border-right: 1px solid #000; background: #00f; }
.scale { height: 35px; display: flex; background: #f0f0f0; border-bottom: 1px solid #000; }
.corner { width: 87px; flex: none; border-right: 1px solid #000; }
.scalerows { flex: 1; min-width: 0; overflow: hidden; }
.months, .weeks { display: flex; height: 17px; text-align: center; line-height: 16px; }
.months { height: 18px; border-bottom: 1px solid #000; }
.months span, .weeks span { flex: none; border-right: 1px solid #000; }
.weeks span { width: 28px; }
.weeks span:first-child { width: 29px; }
.values { width: 1236px; table-layout: fixed; border-collapse: separate; border-spacing: 0; color: #ffff3c; font: 10px/16px "Open Sans", "Noto Sans", sans-serif; }
.c-label { width: 87px; }
.c-first { width: 29px; }
.c-week { width: 28px; }
.values th, .values td { height: 18px; vertical-align: top; }
.values th { padding: 0 3px; border-right: 1px solid #a0a0a0; text-align: left; font-weight: 400; }
.values th div { overflow: hidden; white-space: nowrap; }
.values td { padding: 0 3px 0 0; border-right: 1px solid #808080; text-align: right; }

.status { height: 19px; flex: none; display: flex; gap: 3px; padding: 2px 2px 0 96px; background: #f0f0f0; position: relative; }
.status span { flex: none; height: 17px; padding-left: 1px; border: solid #a0a0a0; border-width: 1px 0 0 1px; line-height: 15px; white-space: nowrap; overflow: hidden; }
.s75 { width: 75px; } .s121 { width: 121px; } .s125 { width: 125px; } .s144 { width: 144px; }
.s86 { width: 86px; } .s153 { width: 153px; } .s100 { width: 100px; } .s231 { width: 231px; }
.status .grow { flex: 1; }
.sizer { position: absolute; right: 0; bottom: 0; width: 12px; height: 12px; fill: none; stroke: #888; }
</style>
